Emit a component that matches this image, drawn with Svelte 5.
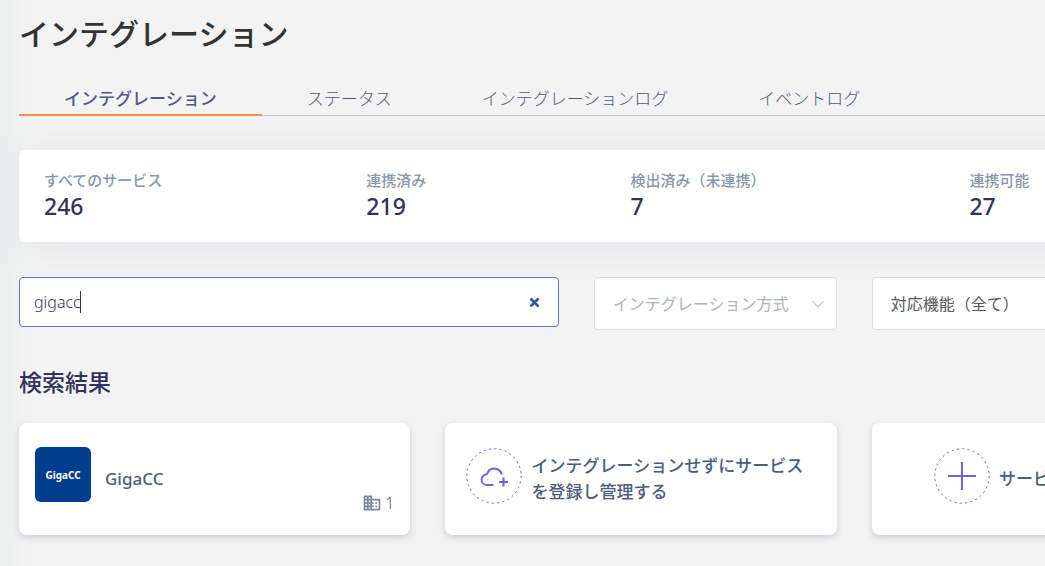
<script lang="ts">
    const tabs = ["インテグレーション", "ステータス", "インテグレーションログ", "イベントログ"];
    const stats = [
        { label: "すべてのサービス", value: 246 },
        { label: "連携済み", value: 219 },
        { label: "検出済み（未連携）", value: 7 },
        { label: "連携可能", value: 27 },
    ];
    let active = $state(0);
    let query = $state("gigacc");
</script>

<div class="page">
    <main>
        <h1>インテグレーション</h1>

        <nav class="tabs">
            {#each tabs as tab, i}
                <button class="tab" class:active={active === i} onclick={() => (active = i)}>{tab}</button>
            {/each}
        </nav>

        <dl class="stats">
            {#each stats as stat}
                <div>
                    <dt>{stat.label}</dt>
                    <dd>{stat.value}</dd>
                </div>
            {/each}
        </dl>

        <form class="filters" onsubmit={(e) => e.preventDefault()}>
            <div class="search">
                <input type="text" aria-label="検索" bind:value={query} />
                {#if query === "gigacc"}
                    <span class="caret"></span>
                {/if}
                <button type="button" class="clear" aria-label="クリア" onclick={() => (query = "")}>
                    <svg width="11" height="11" viewBox="0 0 11 11">
                        <path d="M1.5 1.5l8 8M9.5 1.5l-8 8" stroke="currentColor" stroke-width="2.6" />
                    </svg>
                </button>
            </div>
            <div class="select">
                <select class="empty" aria-label="インテグレーション方式">
                    <option>インテグレーション方式</option>
                </select>
                <svg width="12" height="8" viewBox="0 0 12 8" fill="none">
                    <path d="M.5 1l5.500 6 5.500-6" stroke="#adb3bb" />
                </svg>
            </div>
            <div class="select">
                <select aria-label="対応機能">
                    <option>対応機能（全て）</option>
                </select>
            </div>
        </form>

        <h2>検索結果</h2>

        <div class="cards">
            <article class="card">
                <div class="logo">GigaCC</div>
                <h3>GigaCC</h3>
                <div class="count">
                    <svg width="20" height="20" viewBox="0 0 24 24" fill="#7a859f">
                        <path d="M12 7V3H2v18h20V7H12zM6 19H4v-2h2v2zm0-4H4v-2h2v2zm0-4H4V9h2v2zm0-4H4V5h2v2zm4 12H8v-2h2v2zm0-4H8v-2h2v2zm0-4H8V9h2v2zm0-4H8V5h2v2zm10 12h-8v-2h2v-2h-2v-2h2v-2h-2V9h8v10zm-2-8h-2v2h2v-2zm0 4h-2v2h2v-2z" />
                    </svg>
                    <span>1</span>
                </div>
            </article>

            <article class="card action">
                <svg class="ring" width="56" height="56" viewBox="0 0 56 56" fill="none" stroke="#6c63e0">
                    <circle cx="28" cy="28" r="27.200" stroke-dasharray="2.200 3.140" />
                    <path d="M27.500 37H20.500A5.300 5.300 0 0 1 20 26.500Q21 26.500 21.300 25.500A7.600 7.600 0 0 1 35.800 26.500" stroke-width="2" />
                    <path d="M37.500 29.500v9M33 34h9" stroke-width="2" />
                </svg>
                <h3>インテグレーションせずにサービスを登録し管理する</h3>
            </article>

            <article class="card action request">
                <svg class="ring" width="56" height="56" viewBox="0 0 56 56" fill="none" stroke="#6c63e0">
                    <circle cx="28" cy="28" r="27.200" stroke-dasharray="2.200 3.140" />
                    <path d="M28 14v28M14 28h28" stroke-width="2" />
                </svg>
                <h3>サービス</h3>
            </article>
        </div>
    </main>
</div>

<style>
    :global(body) {
        margin: 0;
        background: #f3f3f3;
    }
    .page {
        overflow: hidden;
        min-height: 100vh;
        background: linear-gradient(90deg, #ebeeee 0, #f3f3f3 28px);
        font-family: "Noto Sans", "Noto Sans CJK JP", sans-serif;
        color: #4f5b7c;
    }
    /* three full cards are wider than the viewport */
    main {
        box-sizing: border-box;
        width: 121%;
        padding: 12px 1px 32px 19px;
    }
    h1, h2, h3, dl, dd { margin: 0; }
    button, input, select {
        font-family: inherit;
        color: inherit;
    }
    h1 {
        font-size: 30px;
        font-weight: 500;
        line-height: 44px;
        color: #333;
    }
    /* tabs */
    .tabs {
        display: flex;
        margin-top: 26px;
        box-shadow: inset 0 -1px #c8c8ca;
    }
    .tab {
        padding: 2px 45px 0;
        border: 0;
        border-bottom: 2px solid transparent;
        background: none;
        font-size: 17px;
        font-weight: 300;
        line-height: 30px;
        cursor: pointer;
    }
    .tab.active {
        border-color: #ff8a50;
        font-weight: 500;
    }
    /* stats */
    .stats {
        display: flex;
        gap: 204px;
        margin-top: 34px;
        padding: 17px 25px 22px;
        border-radius: 6px;
        background: #fff;
        box-shadow: 0 4px 40px rgba(90, 105, 140, .1);
        white-space: nowrap;
    }
    dt {
        font-size: 15px;
        font-weight: 500;
        line-height: 26px;
        color: #8898aa;
    }
    dd {
        font-size: 23px;
        font-weight: 500;
        line-height: 27px;
        color: #32325d;
    }
    /* filters */
    .filters {
        display: grid;
        grid-template-columns: 540fr 243fr 392fr;
        align-items: start;
        gap: 35px;
        margin-top: 35px;
    }
    .search, .select {
        position: relative;
        display: grid;
    }
    input, select {
        box-sizing: border-box;
        width: 100%;
        margin: 0;
        border: 1px solid #dcdee3;
        border-radius: 4px;
        outline: none;
        background: #fff;
        font-size: 16px;
    }
    input {
        height: 50px;
        padding: 0 48px 0 14px;
        border-color: #5e72e4;
        font-weight: 300;
        color: #32325d;
    }
    select {
        height: 53px;
        padding: 0 18px;
        appearance: none;
        color: #55585e;
    }
    select.empty { color: #adb5bd; }
    .select svg {
        position: absolute;
        right: 13px;
        top: 23px;
        pointer-events: none;
    }
    .caret {
        position: absolute;
        left: 61px;
        top: 14px;
        width: 1px;
        height: 22px;
        background: #32325d;
    }
    .clear {
        position: absolute;
        right: 12px;
        top: 13px;
        display: grid;
        place-items: center;
        width: 24px;
        height: 24px;
        padding: 0;
        border: 0;
        background: none;
        color: #2f5c9e;
        cursor: pointer;
    }
    h2 {
        margin-top: 35px;
        font-size: 23px;
        font-weight: 500;
        line-height: 34px;
        color: #32325d;
    }
    /* cards */
    .cards {
        display: grid;
        grid-template-columns: repeat(3, 1fr);
        gap: 35px;
        margin-top: 24px;
    }
    .card {
        box-sizing: border-box;
        display: flex;
        align-items: center;
        min-height: 112px;
        padding: 16px;
        border-radius: 8px;
        background: #fff;
        box-shadow: 0 3px 7px rgba(50, 50, 93, .18);
    }
    h3 {
        font-size: 17px;
        font-weight: 500;
        line-height: 26px;
    }
    .logo {
        display: grid;
        place-items: center;
        width: 56px;
        height: 55px;
        margin: 0 14px 9px 0;
        border-radius: 6px;
        background: #003d8f;
        font-size: 10px;
        font-weight: 700;
        color: #fff;
    }
    .count {
        display: flex;
        align-items: center;
        align-self: flex-end;
        gap: 3px;
        margin-left: auto;
        font-size: 16px;
        font-weight: 300;
        line-height: 32px;
    }
    .action {
        gap: 9px;
        padding: 16px 21px;
    }
    .ring {
        flex: none;
        margin-bottom: 7px;
    }
    .request { padding-left: 62px; }
</style>
